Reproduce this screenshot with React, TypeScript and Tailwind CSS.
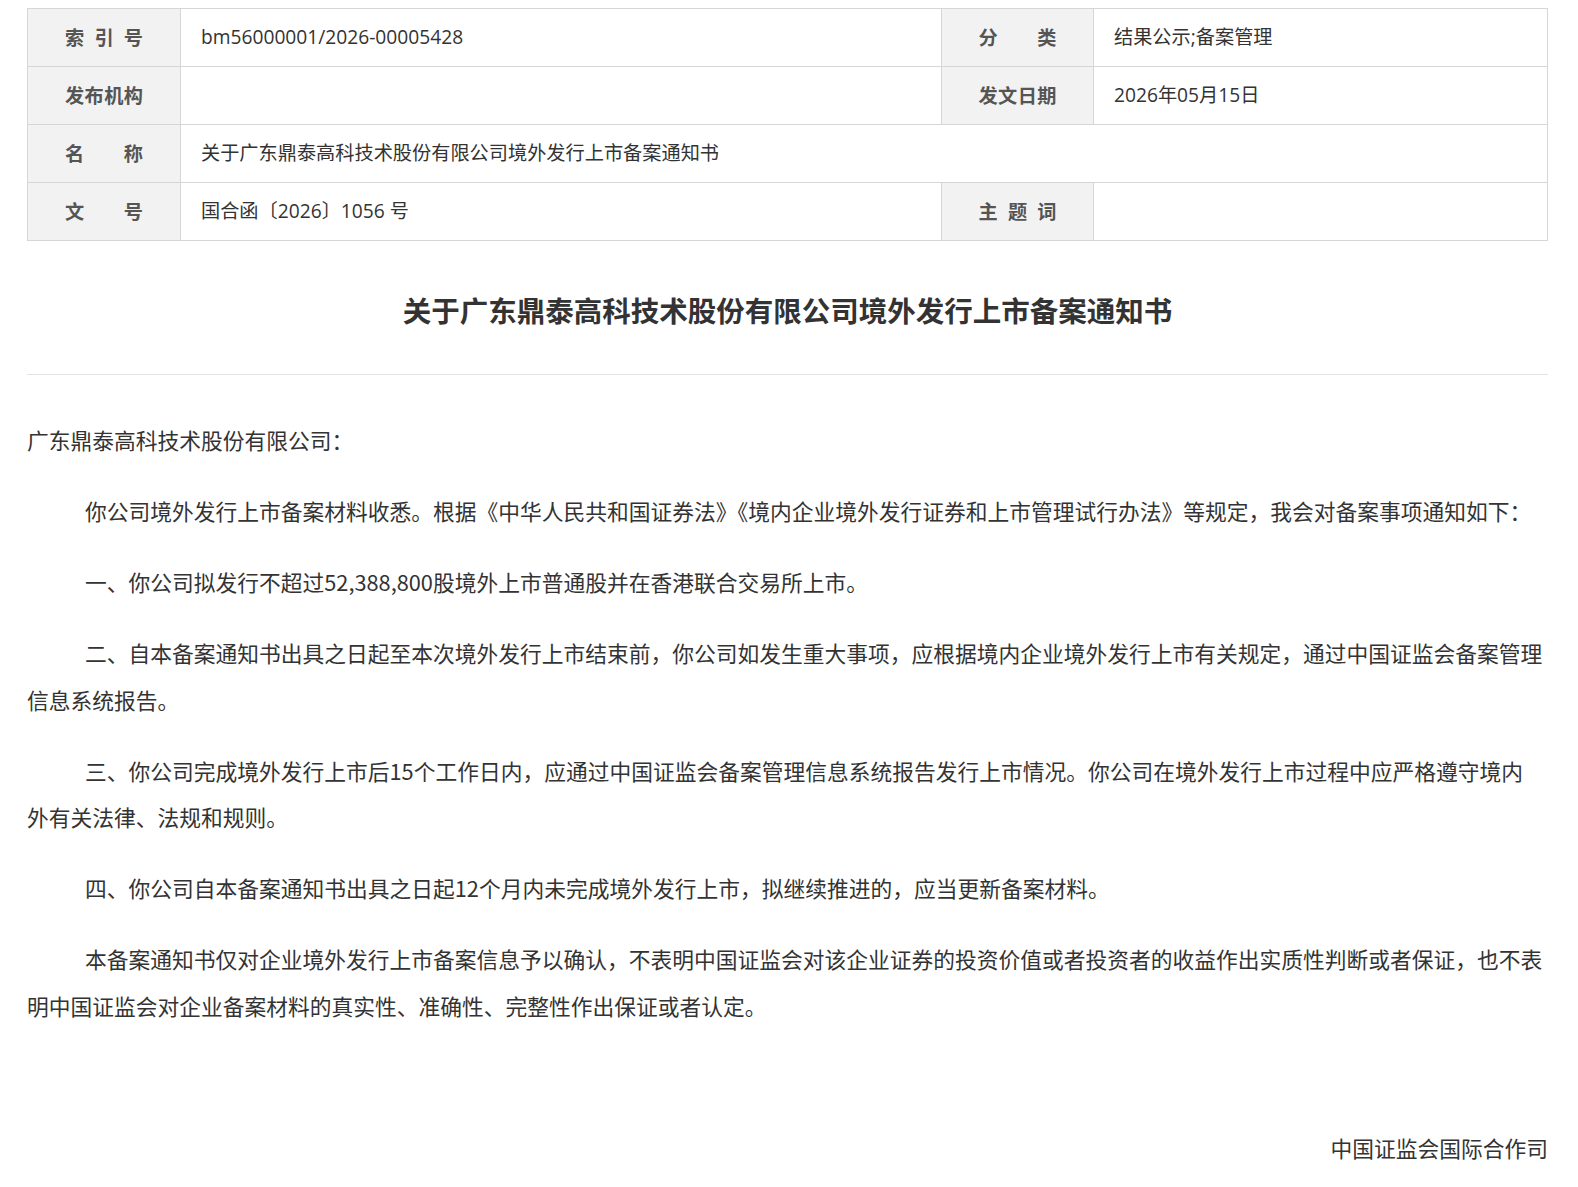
import React from "react";

const cjk = "[font-family:'Noto_Sans_CJK_SC',sans-serif]";

function Label({ chars }: { chars: string[] }) {
  return (
    <div className="flex items-center justify-center bg-[#f2f2f2] border-r border-b border-[#d6d6d6] h-[58px]">
      <span className="flex w-[78px] justify-between font-bold text-[#555] text-[19.2px] leading-none">
        {chars.map((c, i) => (
          <span key={i}>{c}</span>
        ))}
      </span>
    </div>
  );
}

function Value({ text, span }: { text?: string; span?: boolean }) {
  return (
    <div
      className={
        "flex items-center pl-5 border-r border-b border-[#d6d6d6] h-[58px] text-[19.2px] text-[#333] [font-family:'Open_Sans','Noto_Sans_CJK_SC',sans-serif] " +
        (span ? "col-span-3" : "")
      }
    >
      {text}
    </div>
  );
}

export default function App() {
  const p = "text-[21.75px] leading-[46.5px] mb-[24.5px] text-[#333]";
  const pi = p + " indent-[58px]";
  return (
    <div className={"bg-white min-h-[1187px] pl-[27px] pr-[30px] pt-[8px] [text-autospace:no-autospace] " + cjk}>
      <div className="w-[1521px]">
        <div className="grid grid-cols-[153px_761px_152px_1fr] border-l border-t border-[#d6d6d6]">
          <Label chars={["索", "引", "号"]} />
          <Value text="bm56000001/2026-00005428" />
          <Label chars={["分", "类"]} />
          <Value text="结果公示;备案管理" />

          <Label chars={["发", "布", "机", "构"]} />
          <Value />
          <Label chars={["发", "文", "日", "期"]} />
          <Value text="2026年05月15日" />

          <Label chars={["名", "称"]} />
          <Value text="关于广东鼎泰高科技术股份有限公司境外发行上市备案通知书" span />

          <Label chars={["文", "号"]} />
          <Value text="国合函〔2026〕1056 号" />
          <Label chars={["主", "题", "词"]} />
          <Value />
        </div>

        <div className="pt-[47px] pb-[43px] border-b border-[#e2e2e2]">
          <h1 className="text-center font-bold text-[28.5px] leading-[43px] text-[#333]">
            关于广东鼎泰高科技术股份有限公司境外发行上市备案通知书
          </h1>
        </div>

        <div className="pt-[42px]">
          <p className={p}>广东鼎泰高科技术股份有限公司：</p>
          <p className={pi}>
            你公司境外发行上市备案材料收悉。根据《中华人民共和国证券法》《境内企业境外发行证券和上市管理试行办法》等规定，我会对备案事项通知如下：
          </p>
          <p className={pi}>一、你公司拟发行不超过52,388,800股境外上市普通股并在香港联合交易所上市。</p>
          <p className={pi}>
            二、自本备案通知书出具之日起至本次境外发行上市结束前，你公司如发生重大事项，应根据境内企业境外发行上市有关规定，通过中国证监会备案管理信息系统报告。
          </p>
          <p className={pi}>
            三、你公司完成境外发行上市后15个工作日内，应通过中国证监会备案管理信息系统报告发行上市情况。你公司在境外发行上市过程中应严格遵守境内
            <br />
            外有关法律、法规和规则。
          </p>
          <p className={pi}>
            四、你公司自本备案通知书出具之日起12个月内未完成境外发行上市，拟继续推进的，应当更新备案材料。
          </p>
          <p className={pi}>
            本备案通知书仅对企业境外发行上市备案信息予以确认，不表明中国证监会对该企业证券的投资价值或者投资者的收益作出实质性判断或者保证，也不表明中国证监会对企业备案材料的真实性、准确性、完整性作出保证或者认定。
          </p>
          <p className={p}>&nbsp;</p>
          <p className={p + " text-right"}>中国证监会国际合作司</p>
        </div>
      </div>
    </div>
  );
}
